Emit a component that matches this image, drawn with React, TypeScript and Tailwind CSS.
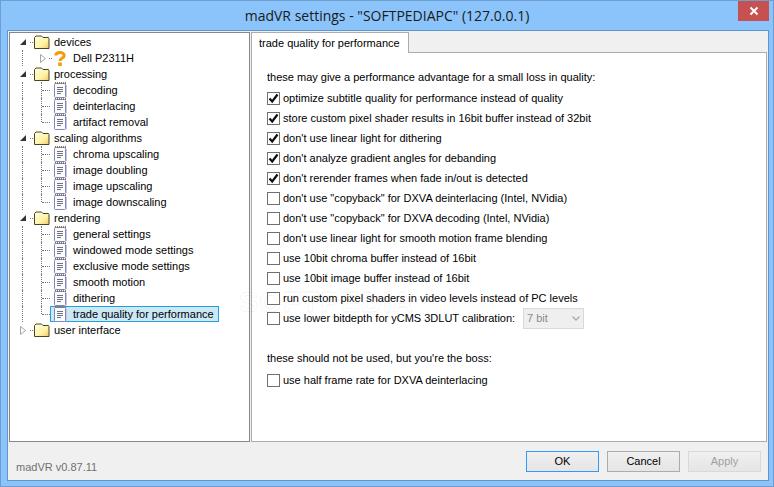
import React from 'react';

const FONT = { fontFamily: '"Liberation Sans", sans-serif' };

type TreeRow = {
  label: string;
  kind: 'root' | 'device' | 'page';
  open?: boolean;
  last?: boolean;
  selected?: boolean;
  rootLine?: boolean;
};

const treeRows: TreeRow[] = [
  { label: 'devices', kind: 'root', open: true, rootLine: true },
  { label: 'Dell P2311H', kind: 'device', rootLine: true },
  { label: 'processing', kind: 'root', open: true, rootLine: true },
  { label: 'decoding', kind: 'page', rootLine: true },
  { label: 'deinterlacing', kind: 'page', rootLine: true },
  { label: 'artifact removal', kind: 'page', last: true, rootLine: true },
  { label: 'scaling algorithms', kind: 'root', open: true, rootLine: true },
  { label: 'chroma upscaling', kind: 'page', rootLine: true },
  { label: 'image doubling', kind: 'page', rootLine: true },
  { label: 'image upscaling', kind: 'page', rootLine: true },
  { label: 'image downscaling', kind: 'page', last: true, rootLine: true },
  { label: 'rendering', kind: 'root', open: true, rootLine: true },
  { label: 'general settings', kind: 'page', rootLine: true },
  { label: 'windowed mode settings', kind: 'page', rootLine: true },
  { label: 'exclusive mode settings', kind: 'page', rootLine: true },
  { label: 'smooth motion', kind: 'page', rootLine: true },
  { label: 'dithering', kind: 'page', rootLine: true },
  { label: 'trade quality for performance', kind: 'page', last: true, selected: true, rootLine: true },
  { label: 'user interface', kind: 'root' },
];

const options: { label: string; checked: boolean }[] = [
  { label: 'optimize subtitle quality for performance instead of quality', checked: true },
  { label: 'store custom pixel shader results in 16bit buffer instead of 32bit', checked: true },
  { label: "don't use linear light for dithering", checked: true },
  { label: "don't analyze gradient angles for debanding", checked: true },
  { label: "don't rerender frames when fade in/out is detected", checked: true },
  { label: 'don\'t use "copyback" for DXVA deinterlacing (Intel, NVidia)', checked: false },
  { label: 'don\'t use "copyback" for DXVA decoding (Intel, NVidia)', checked: false },
  { label: "don't use linear light for smooth motion frame blending", checked: false },
  { label: 'use 10bit chroma buffer instead of 16bit', checked: false },
  { label: 'use 10bit image buffer instead of 16bit', checked: false },
  { label: 'run custom pixel shaders in video levels instead of PC levels', checked: false },
];

function FolderIcon() {
  return (
    <svg width="16" height="16" viewBox="0 0 16 16" className="shrink-0">
      <defs>
        <linearGradient id="folderFill" x1="0" y1="0" x2="1" y2="1">
          <stop offset="0" stopColor="#fffde0" />
          <stop offset="0.6" stopColor="#fdf3a8" />
          <stop offset="1" stopColor="#f0c860" />
        </linearGradient>
      </defs>
      <path d="M0.5 14.5V3.5L2 2H7.5L9 3.5H14.5L15 4.5V14.5Z" fill="url(#folderFill)" stroke="#4a4520" strokeWidth="1" />
    </svg>
  );
}

function PageIcon() {
  return (
    <svg width="13" height="16" viewBox="0 0 13 16" className="shrink-0">
      <rect x="0.5" y="1.5" width="11" height="14" rx="1" fill="#fbfbfd" stroke="#8585c0" />
      <path d="M12.5 3V15.5" stroke="#c8c8d8" />
      <path d="M1 1H12" stroke="#8a7a50" strokeDasharray="1 1" strokeWidth="2" />
      <path d="M3 5.5H9M3 7.5H9M3 9.5H9M3 11.5H7" stroke="#6a747c" strokeWidth="1" />
    </svg>
  );
}

function QuestionIcon() {
  return (
    <svg width="12" height="15" viewBox="0 0 12 15" className="shrink-0">
      <path d="M1.8 4.6C1.8 0.6 10.2 0.6 10.2 4.4C10.2 7.2 6 7 6 10" fill="none" stroke="#f59a0c" strokeWidth="3" />
      <rect x="4.2" y="11.5" width="3.6" height="3.5" fill="#f59a0c" />
    </svg>
  );
}

function Expander({ open }: { open?: boolean }) {
  if (open) {
    return (
      <svg width="6" height="6" viewBox="0 0 6 6" className="shrink-0">
        <path d="M6 0V6H0Z" fill="#333333" />
      </svg>
    );
  }
  return (
    <svg width="6" height="9" viewBox="0 0 6 9" className="shrink-0">
      <path d="M0.5 0.5L5.5 4.5L0.5 8.5Z" fill="#ffffff" stroke="#a6a6a6" />
    </svg>
  );
}

function HDots({ w }: { w: string }) {
  return <span className={`${w} shrink-0 border-t border-dotted border-[#777777]`} />;
}

function TreeItem({ row }: { row: TreeRow }) {
  return (
    <div className="relative flex h-4 items-center text-[11px] leading-none text-black">
      {row.rootLine && row.kind !== 'root' && (
        <span className="absolute left-[12px] top-0 h-4 border-l border-dotted border-[#777777]" />
      )}
      {row.kind === 'root' && (
        <div className="flex items-center pl-[10px]">
          <span className="flex w-[10px] justify-start"><Expander open={row.open} /></span>
          <HDots w="w-[3px]" />
          <span className="ml-px"><FolderIcon /></span>
          <span className="ml-[4px]">{row.label}</span>
        </div>
      )}
      {row.kind === 'device' && (
        <div className="flex items-center pl-[30px]">
          <span className="flex w-[9px]"><Expander /></span>
          <HDots w="w-[3px]" />
          <span className="ml-[2px]"><QuestionIcon /></span>
          <span className="ml-[7px]">{row.label}</span>
        </div>
      )}
      {row.kind === 'page' && (
        <div className="relative flex h-4 items-center pl-[40px]">
          <span className={`absolute left-[31px] top-0 border-l border-dotted border-[#777777] ${row.last ? 'h-2' : 'h-4'}`} />
          <span className="absolute left-[32px] top-2 w-[8px] border-t border-dotted border-[#777777]" />
          <div className={`flex h-4 items-center border pl-[3px] ${row.selected ? 'w-[169px] border-[#26a0da] bg-[#cbe8f6]' : 'border-transparent'}`}>
            <PageIcon />
            <span className="ml-[6px] whitespace-nowrap">{row.label}</span>
          </div>
        </div>
      )}
    </div>
  );
}

function Checkbox({ checked }: { checked: boolean }) {
  return (
    <span className="flex h-[13px] w-[13px] shrink-0 items-center justify-center border border-[#707070] bg-white">
      {checked && (
        <svg width="11" height="11" viewBox="0 0 11 11">
          <path d="M1.5 5.5L4.2 8.5L9.5 1.5" fill="none" stroke="#111111" strokeWidth="2.2" />
        </svg>
      )}
    </span>
  );
}

function OptionRow({ label, checked }: { label: string; checked: boolean }) {
  return (
    <div className="flex h-5 items-center gap-[3px]">
      <Checkbox checked={checked} />
      <span className="whitespace-nowrap">{label}</span>
    </div>
  );
}

function DialogButton({ label, variant }: { label: string; variant: 'default' | 'normal' | 'disabled' }) {
  const tone =
    variant === 'default'
      ? 'border-[#3399ff] text-black'
      : variant === 'normal'
        ? 'border-[#acacac] text-black'
        : 'border-[#d9d9d9] text-[#a0a0a0]';
  return (
    <button className={`h-[21px] w-[73px] border bg-gradient-to-b from-[#f0f0f0] to-[#e5e5e5] text-[11px] leading-none ${tone}`}>
      {label}
    </button>
  );
}

export default function App() {
  return (
    <div
      className="relative flex h-[487px] w-[774px] flex-col overflow-hidden border border-[#6f9dd0] bg-[#8ac4fa] text-[11px] text-black"
      style={FONT}
    >
      {/* Title bar */}
      <div className="relative flex h-[29px] shrink-0 items-center justify-center">
        <span className="text-[14px] text-[#1a1a1a]" style={{ fontFamily: '"Open Sans", sans-serif' }}>
          madVR settings - "SOFTPEDIAPC" (127.0.0.1)
        </span>
        <div className="absolute right-[4px] top-0 flex h-5 w-[31px] items-center justify-center bg-[#c75050]">
          <svg width="10" height="10" viewBox="0 0 10 10">
            <path d="M1.5 1.5L8.5 8.5M8.5 1.5L1.5 8.5" stroke="#ffffff" strokeWidth="2" />
          </svg>
        </div>
      </div>

      {/* Client area */}
      <div className="ml-[6px] mr-[4px] flex h-[451px] flex-col border border-[#5f95cc] bg-[#f0f0f0] pl-px pt-px">
        <div className="flex h-[410px] gap-px">
          {/* Tree */}
          <div className="w-[241px] border border-[#828790] bg-white pt-[1px]">
            {treeRows.map((row) => (
              <TreeItem key={row.label} row={row} />
            ))}
          </div>

          {/* Settings tab */}
          <div className="flex w-[516px] flex-col">
            <div className="-mb-px flex h-[21px]">
              <div className="relative z-10 flex w-[158px] items-center border border-b-0 border-[#acacac] bg-white pl-[7px] whitespace-nowrap">
                trade quality for performance
              </div>
            </div>
            <div className="flex-1 border border-[#acacac] bg-white pl-[15px] pt-[16px]">
              <div className="mb-[3px] h-4 leading-4">these may give a performance advantage for a small loss in quality:</div>
              {options.map((o) => (
                <OptionRow key={o.label} label={o.label} checked={o.checked} />
              ))}
              <div className="flex h-5 items-center gap-[3px]">
                <Checkbox checked={false} />
                <span className="w-[237px] whitespace-nowrap">use lower bitdepth for yCMS 3DLUT calibration:</span>
                <div className="flex h-[21px] w-[61px] items-center justify-between border border-[#d9d9d9] bg-[#efefef] px-[3px] text-[#8a8a8a]">
                  <span>7 bit</span>
                  <svg width="8" height="5" viewBox="0 0 8 5">
                    <path d="M0.5 0.5L4 4L7.5 0.5" fill="none" stroke="#b0b0b0" strokeWidth="1.5" />
                  </svg>
                </div>
              </div>
              <div className="mb-[4px] mt-[22px] h-4 leading-4">these should not be used, but you're the boss:</div>
              <OptionRow label="use half frame rate for DXVA deinterlacing" checked={false} />
            </div>
          </div>
        </div>

        {/* Footer */}
        <div className="flex flex-1 items-center justify-between pl-[7px] pr-[7px]">
          <span className="translate-y-[6px] text-[#707070]">madVR v0.87.11</span>
          <div className="flex gap-2">
            <DialogButton label="OK" variant="default" />
            <DialogButton label="Cancel" variant="normal" />
            <DialogButton label="Apply" variant="disabled" />
          </div>
        </div>
      </div>

      {/* Site watermark */}
      <span className="pointer-events-none absolute left-[238px] top-[280px] text-[29px] font-bold tracking-[1px] text-transparent [-webkit-text-stroke:1px_rgba(0,0,0,0.06)]">
        SOFTPEDIA
      </span>
    </div>
  );
}
